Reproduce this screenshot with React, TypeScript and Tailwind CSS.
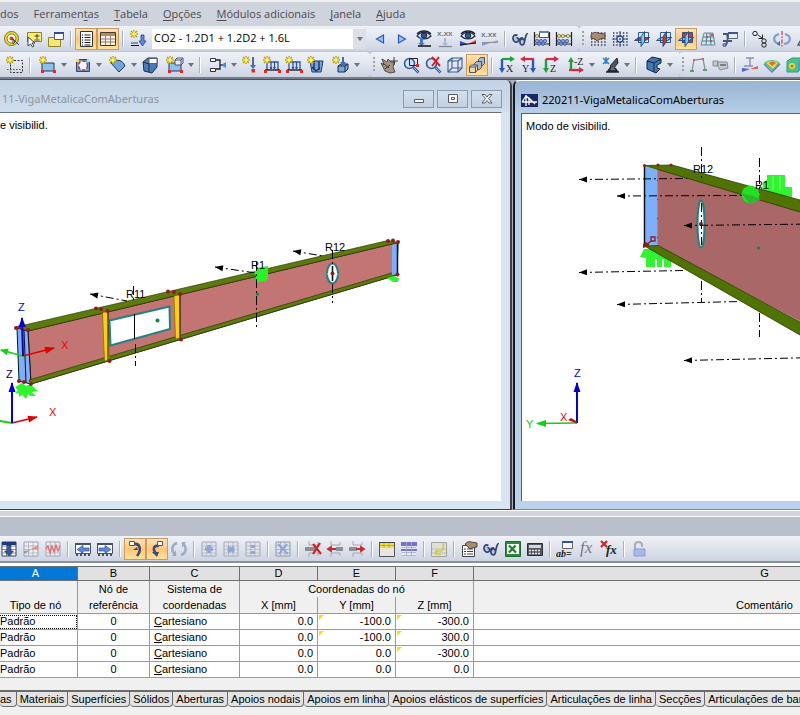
import React from "react";

/* ---------- toolbar glyphs, all on an 18 x 18 grid ---------- */

const Star = ({ x = 0, y = 0 }: { x?: number; y?: number }) => (
  <g transform={`translate(${x} ${y})`}>
    <path d="M4 0v8M0 4h8M1 1l6 6M7 1l-6 6" stroke="#b39a14" strokeWidth="1.4" />
    <path d="M4 1v6M1 4h6" stroke="#ffef3a" strokeWidth="1.2" />
    <circle cx="4" cy="4" r="1.8" fill="#fff46a" />
  </g>
);

const Dots = ({ c = "#333a45" }: { c?: string }) => (
  <path d="M2 3h15M2 6h15M2 9h15M2 12h15M2 15h15" stroke={c} strokeWidth="1.4" strokeDasharray="1.4 1.9" />
);

const Planes = ({ red }: { red: number }) => (
  <g stroke="#1f4a80" strokeWidth=".9">
    <path d="M5.500 2.500h10v10h-10z" fill={red === 2 ? "#f0281e" : "#d4ebfa"} />
    <path d="M1.500 10.500l4-3h11l-4 3z" fill={red === 0 ? "#f0281e" : "#74cdf4"} />
    <path d="M8 6.500l3.500-5v10l-3.500 5z" fill={red === 1 ? "#f0281e" : "#74cdf4"} />
    <path d="M5.500 7.500v5h3M11.500 10.500h1l4-3" fill="none" />
  </g>
);

const Grid = ({ c = "#6f7684", fill = "#eceef3" }: { c?: string; fill?: string }) => (
  <g>
    <path d="M2 2h14v14h-14z" fill={fill} stroke={c} />
    <path d="M2 6h14M2 9.500h14M2 13h14M6.500 2v14M11 2v14" stroke={c} strokeWidth=".6" />
  </g>
);

const Glasses = () => (
  <g fill="none" stroke="#34466f" strokeWidth="1.700">
    <path d="M6.500 5.500c-3-1.500-5 .5-4.500 3.500c.5 3 3.500 4 5 2.500c1.500-1.500.5-4-1.500-3.500" fill="#b7c5e0" />
    <path d="M7.500 11c1.500-3 3-3.500 4.500-3" />
    <path d="M9 10.500c.5-2 4-2.500 4.500 0c.5 2.500-1 4.500-2.500 4.500s-2.500-2-2-4.500z" fill="#b7c5e0" />
    <path d="M13.500 11l1.500-5.500c.3-1.200 1-2 2-2" />
  </g>
);

const Beads = () => (
  <g>
    <path d="M1.500 2v14M16.500 2v14M1 6h16M1 14h16" stroke="#222" strokeWidth="1.200" />
    <g fill="#ecd95b" stroke="#555" strokeWidth=".5">
      <circle cx="4" cy="6" r="1.700" /><circle cx="8" cy="6" r="1.700" /><circle cx="13" cy="6" r="1.700" />
    </g>
    <g fill="#7f9fe0" stroke="#223f86" strokeWidth=".6">
      <circle cx="4" cy="11" r="1.700" /><circle cx="8" cy="11" r="1.700" /><circle cx="12" cy="11" r="1.700" />
      <circle cx="6" cy="14" r="1.500" /><circle cx="10" cy="14" r="1.500" />
    </g>
  </g>
);

const Cube = ({ fill = "#dfe9f8", c = "#3c5a92" }: { fill?: string; c?: string }) => (
  <g fill={fill} stroke={c} strokeWidth="1.100">
    <path d="M2 5l4-3h10v10l-4 4h-10z" />
    <path d="M2 5h10v11M12 5l4-3M6 2v10h10M6 12l-4 4" fill="none" />
  </g>
);

const Surface = () => (
  <g>
    <path d="M3 7h12v8h-12z" fill="#8fc0ea" stroke="#23395e" />
    <path d="M2 14h3v3h-3zM14 14h3v3h-3z" fill="#e22828" />
  </g>
);

const Hand = () => (
  <path d="M2 5c2-3 5-3 7-2l7 1v4l-5 1-3 2-2-2-4-1z" fill="#a98a72" stroke="#4b3a30" strokeWidth=".9" />
);

const Loads = () => (
  <g>
    <path d="M4 14v-8h11v8M8 6v7M11.500 6v7" fill="none" stroke="#2d559f" strokeWidth="1.300" />
    <path d="M2 14h15" stroke="#111" strokeWidth="1.300" />
    <path d="M6.500 11h3l-1.500 3zM10 11h3l-1.500 3z" fill="#2d559f" />
    <path d="M1 14h3v3h-3zM15 14h3v3h-3z" fill="#e22828" />
    <Star />
  </g>
);

const Eye = () => (
  <g>
    <path d="M2 6c4-5 10-5 14 0c-4 4-10 4-14 0z" fill="#e7eefb" stroke="#1b2638" strokeWidth="1.200" />
    <circle cx="9" cy="5.500" r="2.800" fill="#2f57a8" stroke="#101a30" />
    <path d="M2 4c4-4 10-4 14 0" fill="none" stroke="#1b2638" strokeWidth="1.500" />
  </g>
);

const Lens = () => (
  <g>
    <circle cx="7.500" cy="7.500" r="5" fill="#cfe2f8" stroke="#345a9c" strokeWidth="1.600" />
    <path d="M11.500 11.500l5 5" stroke="#345a9c" strokeWidth="2.600" />
    <path d="M12 12l4 4" stroke="#b8cdf0" strokeWidth=".9" />
  </g>
);

const glyphs: Record<string, React.ReactNode> = {
  target: (
    <g>
      <circle cx="8.500" cy="8.500" r="7" fill="#f7e021" stroke="#7d701c" />
      <circle cx="8.500" cy="8.500" r="4.500" fill="#fff" stroke="#7d701c" />
      <circle cx="8.500" cy="8.500" r="2" fill="#dc3a20" />
      <path d="M10 9l6 6M10 9v5l2-2z" stroke="#444" fill="#fff" />
    </g>
  ),
  selectPlus: (
    <g>
      <path d="M2.500 2.500h14v9h-14z" fill="#f8ee72" stroke="#8e8524" />
      <path d="M12 4v5M9.500 6h5M9.500 10h5" stroke="#444" />
      <path d="M3 7v9l2.500-2 2 3 1.500-1-2-3h3z" fill="#fff" stroke="#333" strokeWidth=".9" />
    </g>
  ),
  folder: (
    <g>
      <path d="M1.500 7.500h12v9h-12z" fill="#f6e676" stroke="#8e8524" />
      <path d="M7.500 2.500h9v7h-9z" fill="#fff" stroke="#4b5a7c" />
      <path d="M7 2h10v2h-10z" fill="#324b8a" />
    </g>
  ),
  list: (
    <g>
      <path d="M3.500 1.500h12v15h-12z" fill="#fff" stroke="#333" />
      <path d="M5 5h1M5 7.500h1M5 10h1M5 12.500h1M5 15h1" stroke="#000" strokeWidth="1.200" />
      <path d="M7.500 5h6M7.500 7.500h6M7.500 10h6M7.500 12.500h6M7.500 15h6" stroke="#222" />
    </g>
  ),
  table: (
    <g>
      <path d="M1.500 2.500h15v13h-15z" fill="#f7f3ea" stroke="#4a3c2c" />
      <path d="M2 3h14v3h-14z" fill="#b08a63" />
      <path d="M2 9h14M2 12h14M6.500 6v9M11.500 6v9" stroke="#8f8170" />
    </g>
  ),
  newLoad: (
    <g>
      <Star x={1} />
      <path d="M12 5h3v6h2l-3.500 5-3.500-5h2z" fill="#5b8be0" stroke="#23488f" strokeWidth=".8" />
      <path d="M2 13h7" stroke="#23488f" />
      <path d="M2 15h8v1h-8z" fill="#111" />
    </g>
  ),
  prev: <path d="M12.500 5v8l-7-4z" fill="#9dc0f5" stroke="#2a5cc0" strokeWidth="1.200" />,
  next: <path d="M5.500 5v8l7-4z" fill="#9dc0f5" stroke="#2a5cc0" strokeWidth="1.200" />,
  eyeLoad: (
    <g>
      <Eye />
      <path d="M5 8h3v5h2l-3.500 3-3.500-3h2z" fill="#4676c8" />
      <path d="M3 16h13" stroke="#111" strokeWidth="1.500" />
    </g>
  ),
  eyeResult: (
    <g>
      <Eye />
      <path d="M1 16v-5l8 3z" fill="#2e48d8" />
      <path d="M9 14l8-4v4z" fill="#e83030" />
      <path d="M1 15l16-2" stroke="#111" />
    </g>
  ),
  valLoad: (
    <g>
      <text x="0" y="6" fontSize="8" fontWeight="bold" fill="#777c86" fontFamily="Liberation Sans, sans-serif">x.xx</text>
      <path d="M7 8h2v5h2l-3 3-3-3h2z" fill="#a9b6cf" />
      <path d="M2 16.500h13" stroke="#84888f" strokeWidth="1.300" />
    </g>
  ),
  valResult: (
    <g>
      <text x="0" y="7" fontSize="8" fontWeight="bold" fill="#777c86" fontFamily="Liberation Sans, sans-serif">x.xx</text>
      <path d="M1 16v-4l8 1z" fill="#8d99d8" />
      <path d="M9 13l8-3v3z" fill="#e39b9b" />
      <path d="M1 13l16-1" stroke="#84888f" />
    </g>
  ),
  glasses: <Glasses />,
  beads: <Beads />,
  beadsWin: (
    <g>
      <Beads />
      <path d="M6.500 1.500h9v6h-9z" fill="#fff" stroke="#555" />
      <path d="M6 1h10v2h-10z" fill="#6c7fb1" />
    </g>
  ),
  gridHand: (<g><Dots /><Hand /></g>),
  gridSnap: (
    <g>
      <Dots />
      <path d="M9 1v16M1 9h16" stroke="#345cc0" />
      <circle cx="9" cy="9" r="3" fill="#e9f1ff" stroke="#2545a0" strokeWidth="1.300" />
      <circle cx="9" cy="9" r="1" fill="#2545a0" />
    </g>
  ),
  planeA: <Planes red={0} />,
  planeB: <Planes red={1} />,
  planeC: <Planes red={2} />,
  planeGrid: (
    <g>
      <path d="M5 3h9l2 12h-14z" fill="#cfe6f0" stroke="#6f8797" />
      <path d="M4 7h11M3 11h12M8 3l-1 12M11 3l1 12" stroke="#4f7f96" />
      <path d="M12 4h2v2h-2zM7 6h2v2h-2zM11 10h2v2h-2z" fill="#d94848" />
    </g>
  ),
  cut: (
    <g>
      <path d="M2 4h5M2 11h9M4 16c3-3 3-8 2-12" stroke="#42557c" strokeWidth="1.800" fill="none" />
      <circle cx="3.500" cy="15" r="1.500" fill="#8ea2cc" stroke="#42557c" />
      <path d="M7.500 2.500h9v6h-9z" fill="#e7ecf8" stroke="#59647d" />
      <path d="M7 2h10v2h-10z" fill="#3e5598" />
    </g>
  ),
  moveCopy: (
    <g fill="none" stroke="#222">
      <circle cx="4" cy="3.500" r="2.200" /><circle cx="13" cy="11" r="2.200" /><circle cx="13" cy="15" r="2.200" />
      <path d="M6.500 4.500l5 4M11.500 4.500v4h-4" />
    </g>
  ),
  rotate: (
    <g fill="none">
      <path d="M6 4c-7 2-6 9 1 10M12 4c7 2 6 9-1 10" stroke="#7b9fd0" strokeWidth="2.200" />
      <path d="M9 1v16" stroke="#d33" strokeDasharray="4 1.500 1.500 1.500" strokeWidth="1.200" />
      <path d="M7 11v5l-3-2z" fill="#3e68a8" />
    </g>
  ),
  mirror: <path d="M3 15l6-11 6 11z" fill="none" stroke="#555" strokeWidth="1.300" />,

  dotted: (
    <g>
      <path d="M4.500 4.500h12v12h-12z" fill="none" stroke="#333" strokeDasharray="2 1.500" />
      <path d="M4.500 1v16M1 13.500h16" stroke="#555" strokeDasharray="1.500 1.500" />
      <Star />
    </g>
  ),
  newSurface: (<g><Surface /><Star /></g>),
  opening: (
    <g>
      <path d="M2.500 3.500h13v12h-13z" fill="#6d9dd0" stroke="#35445e" />
      <circle cx="9" cy="9.500" r="4.500" fill="#f2f5fa" stroke="#ba3434" strokeWidth="1.400" strokeDasharray="3 2" />
      <path d="M2 3h3v3h-3z" fill="#f4e53a" />
      <path d="M13 3h3v3h-3z" fill="#c9d4e5" />
    </g>
  ),
  fan: (
    <g>
      <path d="M2 7c5-5 12-3 14 3l-6 6z" fill="#6fa6dc" stroke="#23395e" />
      <Star />
    </g>
  ),
  solid: (
    <g>
      <path d="M2 6l5-4h9v9l-5 6-8-2z" fill="#4d7bb8" stroke="#1d2c4a" />
      <path d="M8 2.500h8v5h-8z" fill="#fff" stroke="#55617c" />
      <path d="M2 6l6 2v8" fill="none" stroke="#1d2c4a" />
    </g>
  ),
  solidSurf: (
    <g>
      <Surface />
      <path d="M9 4l2-2h6v5l-2 2h-6zM9 4h6v5M15 4l2-2" fill="#e6edf8" stroke="#3b4660" strokeWidth=".9" />
      <Star />
    </g>
  ),
  member: (
    <g>
      <path d="M1.500 2.500h5v3h-5zM1.500 12.500h5v3h-5z" fill="#fff" stroke="#333" />
      <path d="M7 4h4v9h-4M11 9h5" fill="none" stroke="#222" strokeWidth="1.300" />
      <path d="M17 6v6l-5-3z" fill="#4a8ad8" />
    </g>
  ),
  nodeLoad: (
    <g>
      <Star x={1} />
      <path d="M11 1h2v8h2l-3 4-3-4h2z" fill="#3f6cc0" />
      <path d="M10.500 13h3.500v3.500h-3.500z" fill="#e22828" />
    </g>
  ),
  loads: <Loads />,
  surfLoad: (
    <g>
      <path d="M3 5h13l-2 11h-9z" fill="#78a5d6" stroke="#23395e" />
      <path d="M7 5v9M12 5v9M5 11l4 4 4-3" stroke="#173770" strokeWidth="1.500" fill="none" />
      <Star />
    </g>
  ),
  solidLoad: (
    <g>
      <path d="M6 10l3-2h7v5l-3 3h-7z" fill="#7aa8d8" stroke="#1d2c4a" />
      <path d="M6 10h7v6M13 10l3-2" fill="none" stroke="#1d2c4a" />
      <path d="M10 1h2v5h2l-3 4-3-4h2z" fill="#3f6cc0" />
      <Star />
    </g>
  ),
  pan: (
    <g>
      <path d="M2 3l5 3 1-3 3 3 4 0-2 5 2 5-5 1-5-2-4-8 3 2z" fill="#a39384" stroke="#4a4038" strokeWidth=".9" />
      <path d="M14 1v8M10 5h8M3 7l6 5M5 13l5-4" stroke="#332c26" strokeWidth=".9" />
    </g>
  ),
  zoomWin: (<g><Lens /><path d="M7.500 2.500h8v7h-8z" fill="none" stroke="#222" /><path d="M14 8h3v3h-3z" fill="#e22828" /></g>),
  zoomX: (<g><Lens /><path d="M8 1l8 9M15 1l-7 9" stroke="#d81e1e" strokeWidth="2" /></g>),
  cube: <Cube />,
  cubes: (
    <g fill="#a9b6cb" stroke="#39476a" strokeWidth=".9">
      <path d="M10.500 3.500l2-2h4v6l-2 2h-4z" />
      <path d="M6.500 7.500l2-2h5v6l-2 2h-5z" />
      <path d="M1.500 11l2-2h6v5l-2 2.500h-6zM1.500 11h6v5.500M7.500 11l2-2" fill="#e8d6ae" />
    </g>
  ),
  viewX: (
    <g>
      <path d="M4 3v10" stroke="#2b56c6" strokeWidth="2.400" /><path d="M1 12h6l-3 5z" fill="#2b56c6" />
      <path d="M4 3h9" stroke="#1fa23c" strokeWidth="2.200" /><path d="M12 0v6l5-3z" fill="#1fa23c" />
      <text x="8" y="16" fontSize="10" fill="#222" fontFamily="Liberation Serif, serif">X</text>
    </g>
  ),
  viewY: (
    <g>
      <path d="M13 3v10" stroke="#2b56c6" strokeWidth="2.400" /><path d="M10 12h6l-3 5z" fill="#2b56c6" />
      <path d="M4 3h10" stroke="#dc2742" strokeWidth="2.200" /><path d="M5 0v6l-5-3z" fill="#dc2742" />
      <text x="2" y="16" fontSize="10" fill="#222" fontFamily="Liberation Serif, serif">Y</text>
    </g>
  ),
  viewZ: (
    <g>
      <path d="M4 3v10" stroke="#1fa23c" strokeWidth="2.400" /><path d="M1 12h6l-3 5z" fill="#1fa23c" />
      <path d="M4 3h9" stroke="#dc2742" strokeWidth="2.200" /><path d="M12 0v6l5-3z" fill="#dc2742" />
      <text x="8" y="16" fontSize="10" fill="#222" fontFamily="Liberation Serif, serif">Z</text>
    </g>
  ),
  viewMinusZ: (
    <g>
      <path d="M4 5v10" stroke="#1fa23c" strokeWidth="2.400" /><path d="M1 6h6l-3-5z" fill="#1fa23c" />
      <path d="M2 14h11" stroke="#dc2742" strokeWidth="2.200" /><path d="M12 11v6l5-3z" fill="#dc2742" />
      <text x="7" y="9" fontSize="10" fill="#222" fontFamily="Liberation Serif, serif">-Z</text>
    </g>
  ),
  scope: (
    <g>
      <path d="M1 2l6 6M7 2l-6 6M4 1v7" stroke="#2e7bd0" strokeWidth="1.500" />
      <path d="M15 2l-7 8 3 3 5-6z" fill="#4d525c" stroke="#20242c" />
      <path d="M4 16h13M9 11l-3 4h9l-2-3" stroke="#20242c" strokeWidth="1.500" fill="#6a6f78" />
    </g>
  ),
  block: (
    <g stroke="#15243c">
      <path d="M2 5l5-4 9 2v4l-4 2v3l3 1-4 4-9-4z" fill="#4278b4" />
      <path d="M2 5l7 2v9M9 7l7-4" fill="none" />
    </g>
  ),
  frame: (
    <g>
      <path d="M3 15l2-11 9-1 2 10" fill="none" stroke="#8b919b" strokeWidth="1.300" />
      <path d="M4 3h2v2h-2zM13 2h2v2h-2z" fill="#c66" />
      <path d="M1 15h4M14 14h4" stroke="#4ba85a" strokeWidth="2" />
    </g>
  ),
  tape: (
    <g>
      <path d="M2 5h5v5h-5zM7 6h9l1 6-8 2-3-5z" fill="#c5c8cd" stroke="#888d96" />
      <path d="M9 9h6" stroke="#666" strokeWidth="1.500" />
    </g>
  ),
  deform: (
    <g>
      <path d="M5 2h8M9 2v8M3 10h9" stroke="#8a94b4" strokeWidth="1.500" />
      <path d="M1 16v-4l8 1z" fill="#4d61dc" /><path d="M9 13l8-3v3z" fill="#e85c5c" />
    </g>
  ),
  plate: (
    <g>
      <path d="M1 7c5-4 11-4 16 0l-7 8z" fill="#3ec26e" />
      <path d="M3 7c4-3 9-3 12 0l-5 6z" fill="#e9dc3c" />
      <path d="M6 7c2-2 5-2 7 0l-4 3z" fill="#e3684a" />
      <path d="M1 8l8 8 8-8" fill="none" stroke="#5a78d8" strokeWidth="1.300" />
    </g>
  ),
  solidRes: (
    <g>
      <path d="M2 5l5-3h10v9l-4 5h-11z" fill="#4cc37e" stroke="#3a8f93" />
      <circle cx="7" cy="10" r="3" fill="#e6df3c" /><circle cx="7" cy="10" r="1.500" fill="#e35a40" />
      <path d="M13 6l4-3v8l-4 4z" fill="#4a9fd0" />
    </g>
  ),

  gridDown: (
    <g>
      <Grid fill="#fff" c="#39435c" /><path d="M2 2h14v3h-14z" fill="#1f3a74" />
      <path d="M7.500 5h3v6h3l-4.500 5-4.500-5h3z" fill="#31579e" stroke="#16305e" strokeWidth=".6" />
    </g>
  ),
  gridDiag: (<g><Grid c="#9aa0ab" /><path d="M2 14v-3l7-1z" fill="#9499b2" /><path d="M9 9l7-4v4z" fill="#ee8a8a" /></g>),
  gridWave: (<g><Grid c="#a0a5b0" /><path d="M2 9l2-3 2 7 2-7 2 6 2-7 2 6 2-5" fill="none" stroke="#e66" strokeWidth="1.200" /></g>),
  colLeft: (
    <g>
      <path d="M1.500 3.500h15v10h-15z" fill="#fff" stroke="#4b515c" /><path d="M1 3h16v2h-16zM2 13h2v3h-2zM6 13h2v3h-2zM10 13h2v3h-2zM14 13h2v3h-2z" fill="#4b515c" />
      <path d="M15 8v3h-6v2.500l-6-4 6-4v2.500z" fill="#5e88de" stroke="#2c4f9e" strokeWidth=".7" />
    </g>
  ),
  colRight: (
    <g>
      <path d="M1.500 3.500h15v10h-15z" fill="#fff" stroke="#4b515c" /><path d="M1 3h16v2h-16zM2 13h2v3h-2zM6 13h2v3h-2zM10 13h2v3h-2zM14 13h2v3h-2z" fill="#4b515c" />
      <path d="M3 8v3h6v2.500l6-4-6-4v2.500z" fill="#5e88de" stroke="#2c4f9e" strokeWidth=".7" />
    </g>
  ),
  jumpOut: (
    <g>
      <path d="M8 4c6-1 8 6 3 12" fill="none" stroke="#3b4c70" strokeWidth="2.600" />
      <path d="M3.500 1.500h5v4h-5z" fill="#fff" stroke="#555" /><path d="M11 7l-4 3h5z" fill="#3b4c70" />
    </g>
  ),
  jumpIn: (
    <g>
      <path d="M11 6c-6-1-6 3-4 6v2" fill="none" stroke="#3b4c70" strokeWidth="2.600" />
      <path d="M9.500 1.500h5v4h-5z" fill="#fff" stroke="#555" /><path d="M4 12h7l-2 5z" fill="#3b4c70" />
    </g>
  ),
  sync: (
    <g fill="none" stroke="#9eaabf" strokeWidth="2.500">
      <path d="M7 3c-6 2-6 9-1 12M11 15c6-2 6-9 1-12" />
      <path d="M6 10v6h-4zM12 8v-6h4z" fill="#9eaabf" stroke="none" />
    </g>
  ),
  addA: (<g><Grid c="#a4a9b4" fill="#e1e4ea" /><path d="M9 5v8M5 9h8" stroke="#93a4d6" strokeWidth="3.500" /></g>),
  addB: (<g><Grid c="#a4a9b4" fill="#e1e4ea" /><path d="M6 7l6 5M12 7l-6 5" stroke="#93a4d6" strokeWidth="3" /></g>),
  addC: (<g><Grid c="#a4a9b4" fill="#e1e4ea" /><path d="M7 5h4v3h-4zM7 11h4v3h-4z" fill="#93a4d6" /></g>),
  clear: (<g><Grid c="#8f97a8" fill="#dfe6f2" /><path d="M4 4l10 10M13 4l-8 10" stroke="#8fa4d8" strokeWidth="2" /></g>),
  delRow: (
    <g>
      <path d="M5 1v4h9v-3M5 17v-4h9v3" fill="none" stroke="#aaa" /><path d="M1 7h10v4h-10z" fill="#8b8f96" />
      <path d="M9 4l8 10M16 3l-7 11" stroke="#cf2222" strokeWidth="2.200" />
    </g>
  ),
  insLeft: (
    <g>
      <path d="M5 1v4h9v-3M5 17v-4h9v3" fill="none" stroke="#aaa" /><path d="M10 7h7v4h-7z" fill="#8b8f96" />
      <path d="M10 9h-5M5 7l-3 2 3 2z" stroke="#c62a2a" strokeWidth="1.800" fill="#c62a2a" />
    </g>
  ),
  insRight: (
    <g>
      <path d="M5 1v4h9v-3M5 17v-4h9v3" fill="none" stroke="#aaa" /><path d="M1 7h8v4h-8z" fill="#8b8f96" />
      <path d="M8 9h5M13 7l3 2-3 2z" stroke="#c62a2a" strokeWidth="1.800" fill="#c62a2a" />
    </g>
  ),
  yellowTop: (
    <g>
      <path d="M1.500 2.500h15v14h-15z" fill="#e7e6e2" stroke="#555" /><path d="M2 3h14v5h-14z" fill="#efe14a" />
      <path d="M2 5.500h14M6 3v5M11 3v5" stroke="#a79c2d" strokeWidth=".7" /><path d="M1 2h16v1h-16z" fill="#444" />
    </g>
  ),
  blueRows: (
    <g>
      <path d="M2 2h14v14h-14z" fill="#e7eaf6" /><path d="M1 3h16M1 5h16M1 10h16" stroke="#7373cf" strokeWidth="1.800" />
      <path d="M2 7.500h14M2 12.500h14M2 15.500h14M6.500 2v14M11.500 2v14" stroke="#aab" strokeWidth=".8" />
    </g>
  ),
  note: (
    <g>
      <path d="M1.500 2.500h15v14h-15z" fill="#dde1d6" stroke="#a0a69c" /><path d="M2 9h14M2 13h14" stroke="#b9bfb2" />
      <path d="M13 3c1 3 0 7-2 8h-5v3h5" fill="none" stroke="#d8c93a" strokeWidth="1.600" />
    </g>
  ),
  props: (
    <g>
      <path d="M2.500 5.500h12v11h-12z" fill="#fff" stroke="#444" /><path d="M4 9h2M4 11.500h2M4 14h2M7 9h6M7 11.500h6M7 14h6" stroke="#444" />
      <path d="M5 4c2-2 4-3 6-2l6 1v4l-5 1-2 1-2-2z" fill="#a98a72" stroke="#4b3a30" strokeWidth=".9" />
    </g>
  ),
  excel: (
    <g>
      <path d="M1.500 1.500h15v15h-15z" fill="#2f8a40" stroke="#1c6a2d" /><path d="M3 4h12v10h-12z" fill="#f2f9f0" />
      <path d="M5 5.500l7 7M11.500 5.500l-6.500 7" stroke="#227a33" strokeWidth="2.200" />
    </g>
  ),
  calc: (
    <g>
      <path d="M1.500 3.500h15v12h-15z" fill="#55585f" stroke="#2c2e33" /><path d="M3 5h12v3h-12z" fill="#d3d7de" />
      <path d="M3 10.500h12M3 13.500h12" stroke="#e5e7ea" strokeWidth="1.500" strokeDasharray="2 1" />
    </g>
  ),
  abWin: (
    <g>
      <path d="M6.500 1.500h10v7h-10z" fill="#f3f5fa" stroke="#666" /><path d="M6 1h11v2h-11z" fill="#37528f" />
      <text x="0" y="17" fontSize="10" fontWeight="bold" fontStyle="italic" fill="#222" fontFamily="Liberation Serif, serif">ab=</text>
    </g>
  ),
  fx: <text x="2" y="13" fontSize="17" fontStyle="italic" fill="#777c85" fontFamily="Liberation Serif, serif">fx</text>,
  fxDel: (
    <g>
      <text x="6" y="14" fontSize="13" fontWeight="bold" fontStyle="italic" fill="#222" fontFamily="Liberation Serif, serif">fx</text>
      <path d="M1 1l6 6M7 1l-6 6" stroke="#d02424" strokeWidth="2.200" />
    </g>
  ),
  lock: (
    <g>
      <path d="M5 9v-4c0-4 7-4 7 0v2" fill="none" stroke="#a7adb9" strokeWidth="2" />
      <path d="M4 9h11v7h-11z" fill="#a7b9ea" stroke="#8d9cc9" />
    </g>
  ),
};

type Item = { k: "b" | "p" | "s" | "d"; n?: string };
const parse = (s: string): Item[] =>
  s.split(" ").map((t) => {
    if (t === "|") return { k: "s" };
    if (t.startsWith("*")) return { k: "p", n: t.slice(1) };
    if (t.startsWith("+")) return { k: "d", n: t.slice(1) };
    return { k: "b", n: t };
  });

const Glyph = ({ n }: { n: string }) => (
  <svg width="18" height="18" viewBox="0 0 18 18" fill="none" aria-hidden="true" className="block shrink-0">
    {glyphs[n]}
  </svg>
);

const Caret = () => (
  <svg width="6" height="4" viewBox="0 0 6 4" aria-hidden="true" className="shrink-0">
    <path d="M0 0h6l-3 4z" fill="#6d737e" />
  </svg>
);

const Tools = ({ items }: { items: string }) => (
  <>
    {parse(items).map((it, i) => {
      if (it.k === "s")
        return <span key={i} className="mx-[3px] h-4 w-0.5 shrink-0 border-l border-r border-l-[#a9b1c0] border-r-white" />;
      if (it.k === "p")
        return (
          <button key={i} type="button" aria-pressed="true" aria-label={it.n}
            className="flex h-[22px] w-[22px] shrink-0 items-center justify-center border border-[#c99a62] bg-linear-to-b from-[#fde3bd] via-[#ffc673] to-[#ffe39a]">
            <Glyph n={it.n!} />
          </button>
        );
      if (it.k === "d")
        return (
          <button key={i} type="button" aria-label={it.n} className="flex h-[22px] w-[35px] shrink-0 items-center gap-1 pl-[5px]">
            <Glyph n={it.n!} />
            <Caret />
          </button>
        );
      return (
        <button key={i} type="button" aria-label={it.n} className="flex h-[22px] w-[22px] shrink-0 items-center justify-center">
          <Glyph n={it.n!} />
        </button>
      );
    })}
  </>
);

const Grip = () => (
  <span className="mr-[3px] ml-[3px] h-4 w-[2px] shrink-0 bg-[repeating-linear-gradient(to_bottom,#9aa3b3_0_2px,transparent_2px_4px)]" />
);

const bar = "flex h-[25px] shrink-0 items-center bg-linear-to-b from-[#eff2f8] via-[#e0e5ef] to-[#ccd3e1]";

/* ---------- menu ---------- */

const menu: [string, string, string][] = [
  ["", "", "dos"],
  ["Ferramen", "t", "as"],
  ["", "T", "abela"],
  ["", "O", "pções"],
  ["", "M", "ódulos adicionais"],
  ["", "J", "anela"],
  ["", "A", "juda"],
];

/* ---------- model views ---------- */

const label = { fontFamily: "Liberation Sans, Arial, sans-serif", fontSize: 11 };

const Arrow = ({ x1, y1, x2, y2, color, w = 2, head = 9 }: { x1: number; y1: number; x2: number; y2: number; color: string; w?: number; head?: number }) => {
  const a = (Math.atan2(y2 - y1, x2 - x1) * 180) / Math.PI;
  return (
    <g>
      <line x1={x1} y1={y1} x2={x2} y2={y2} stroke={color} strokeWidth={w} />
      <path d={`M1 0l-${head + 1} -3.500v7z`} fill={color} transform={`translate(${x2} ${y2}) rotate(${a})`} />
    </g>
  );
};

const DashArrow = ({ x1, y1, x2, y2 }: { x1: number; y1: number; x2: number; y2: number }) => {
  const a = (Math.atan2(y2 - y1, x2 - x1) * 180) / Math.PI;
  return (
    <g>
      <line x1={x2} y1={y2} x2={x1} y2={y1} stroke="#000" strokeDasharray="8 3 2 3" />
      <path d="M0 0l-8 -3v6z" fill="#000" transform={`translate(${x2} ${y2}) rotate(${a})`} />
    </g>
  );
};

const Nodes = ({ pts, r = 2 }: { pts: number[][]; r?: number }) => (
  <>
    {pts.map(([x, y], i) => (
      <circle key={i} cx={x} cy={y} r={r} fill="#8f1d1d" />
    ))}
  </>
);

const LeftModel = () => (
  <svg width="501" height="388" viewBox="0 113 501 388" fill="none" role="img" aria-label="Viga, vista isométrica" className="block overflow-visible">
    <path d="M15 387l7 -4l4 3l4 -2l8 7l-6 1l4 4h-6l-2 -2l-2 5l-4 -4l-3 2v-4h-4l3 -3z" fill="#2ef52e" />
    <path d="M28 331L398 242.500L397 275L31 384z" fill="#c37573" stroke="#222" />
    <path d="M17 328L28 331L31 384L19 381z" fill="#7cb0fa" stroke="#111" />
    <path d="M24 330L26 383" stroke="#111" />
    <path d="M29 380L395 272L397 275L31 384z" fill="#5d7a0c" stroke="#2c3a05" strokeWidth=".7" />
    <path d="M16 327L388 240.500L398 242.500L28 331z" fill="#5d7a0c" stroke="#2c3a05" strokeWidth=".7" />
    <path d="M392 245L397 243.500V274L392 275z" fill="#7cb0fa" />
    <path d="M397.500 243V274" stroke="#111" strokeWidth="1.500" />
    <path d="M102.500 312.500L108 311.500L109.500 360L104.500 361z" fill="#ffd000" stroke="#6d5a00" strokeWidth=".6" />
    <path d="M174 296L179.500 294.500L180.500 338L175.500 339z" fill="#ffd000" stroke="#6d5a00" strokeWidth=".6" />
    <path d="M108 312V360M180 295V338" stroke="#111" />
    <path d="M109.500 320.500L169.500 306.500L170 329L110.500 345.500z" fill="#fff" stroke="#1f8286" strokeWidth="2" />
    <circle cx="157.500" cy="320.500" r="2" fill="#0b8a3c" />
    <path d="M133.500 286V303M135.500 344V366" stroke="#000" strokeDasharray="9 3 2 3" />
    <path d="M134.500 314V339" stroke="#000" />
    <ellipse cx="332.500" cy="273.500" rx="5.500" ry="10" fill="#fff" stroke="#1f8286" strokeWidth="2" />
    <path d="M332.500 250V303" stroke="#000" strokeDasharray="9 3 2 3" />
    <path d="M332.500 266V281" stroke="#000" strokeWidth="1.500" />
    <circle cx="332.500" cy="273.500" r="2" fill="#8f1d1d" />
    <path d="M327 274h1M337 274h1" stroke="#d8a020" strokeWidth="2" />
    <path d="M250 272L256 271V268L268 266V280L256 283V275z" fill="#24f524" />
    <path d="M256.500 262V327" stroke="#000" strokeDasharray="9 3 2 3" />
    <circle cx="257.500" cy="294" r="1.500" fill="#0b8a3c" />
    <path d="M387 278l6 -2l6 2l-1 4h-5z" fill="#2ef52e" />
    <DashArrow x1={127} y1={301} x2={90} y2={294} />
    <DashArrow x1={256} y1={273} x2={215} y2={267} />
    <DashArrow x1={323} y1={256} x2={293} y2={251} />
    <Nodes pts={[[16, 328], [20, 327], [28, 330], [19, 381], [24, 382], [31, 384], [96, 308.500], [101, 309], [107.500, 311], [109.500, 361], [168, 291.500], [174, 292], [180, 294], [181, 339.500], [388, 241], [393, 240.500], [398, 242], [397.500, 274.500]]} />
    <Arrow x1={23} y1={356} x2={54} y2={348} color="#e00000" w={1.5} />
    <Arrow x1={23} y1={356} x2={1} y2={350} color="#12d012" w={1.5} head={7} />
    <Arrow x1={23} y1={356} x2={22} y2={318} color="#0000d8" />
    <Arrow x1={12} y1={423} x2={37} y2={417} color="#e00000" w={1.5} />
    <path d="M12 423L0 421" stroke="#12d012" strokeWidth="2" />
    <Arrow x1={12} y1={423} x2={12} y2={383} color="#0000d8" />
    <g style={label}>
      <text x="126" y="298" fill="#000">R11</text>
      <text x="251" y="269" fill="#000">R1</text>
      <text x="325" y="251" fill="#000">R12</text>
      <text x="18" y="311" fill="#0000e8">Z</text>
      <text x="61" y="349" fill="#f00000">X</text>
      <text x="6" y="378" fill="#000070">Z</text>
      <text x="49" y="416" fill="#f00000">X</text>
    </g>
  </svg>
);

const RightModel = () => (
  <svg width="378" height="387" viewBox="522 114 378 387" fill="none" role="img" aria-label="Viga, vista em perspectiva" className="block overflow-visible">
    <path d="M640 257L644 249H658L671 257V267H664V259H662V267H657V259H655V267H646V258z" fill="#2ef52e" />
    <path d="M762 194L763 182L767 180V175H785V187H792V197z" fill="#2ef52e" />
    <path d="M767 180v10M773 176v14M780 176v14" stroke="#7cfb7c" />
    <path d="M657 168L900 240V374L657 246z" fill="#a96767" />
    <path d="M644.500 166L657.500 170V246H644.500z" fill="#7cb0fa" />
    <path d="M644.500 166V246" stroke="#111" strokeWidth="1.500" />
    <path d="M657.500 180V240" stroke="#6a3a4a" strokeDasharray="1 18" />
    <path d="M644.500 165.500L672 165L800 200L900 227V241L800 212z" fill="#4f7404" stroke="#2c3a05" strokeWidth=".8" />
    <path d="M644.500 246L658 245.500L800 322L900 376V389L800 335z" fill="#4f7404" stroke="#2c3a05" strokeWidth=".8" />
    <circle cx="750.500" cy="194.500" r="9" fill="#22e022" />
    <path d="M741 193L752 196L761 199L750 203.500z" fill="#2fb52f" />
    <ellipse cx="701" cy="224" rx="3.500" ry="23.500" fill="#fff" stroke="#1f8286" strokeWidth="2" />
    <path d="M701.500 147V178M701.500 203V245M701.500 281V302M759.500 158V193M759.500 313V337" stroke="#000" strokeDasharray="9 3 2 3" />
    <circle cx="701" cy="224" r="2" fill="#8f1d1d" />
    <circle cx="758.500" cy="248" r="1.500" fill="#0b8a3c" />
    <DashArrow x1={687} y1={178.500} x2={579} y2={179.500} />
    <DashArrow x1={743} y1={195.500} x2={617} y2={196} />
    <DashArrow x1={860} y1={223.500} x2={684} y2={225.500} />
    <DashArrow x1={684} y1={270.500} x2={579} y2={272.500} />
    <DashArrow x1={740} y1={301.500} x2={617} y2={304.500} />
    <DashArrow x1={860} y1={356.500} x2={684} y2={360.500} />
    <Nodes pts={[[644.500, 165.500], [658, 165], [671, 165]]} r={1.500} />
    <path d="M651 237h4v4h-4zM651 241L644 247" stroke="#8f1d1d" strokeWidth="1.300" />
    <path d="M643 248v-4l3 -2l3 2v2z" fill="#8f1d1d" />
    <Arrow x1={577} y1={423} x2={577} y2={383} color="#0000d8" />
    <Arrow x1={577} y1={423} x2={537} y2={423.500} color="#12d012" w={1.500} />
    <path d="M577 423.500L568 420L571 418L576 421z" fill="#e00000" />
    <g style={label}>
      <text x="693" y="173" fill="#000">R12</text>
      <text x="755" y="189" fill="#000">R1</text>
      <text x="574" y="377" fill="#0000e8">Z</text>
      <text x="526" y="428" fill="#20c020">Y</text>
      <text x="560" y="421" fill="#f00000">X</text>
    </g>
  </svg>
);

/* ---------- node table ---------- */

const rows: [string, string, string][] = [
  ["0.0", "-100.0", "-300.0"],
  ["0.0", "-100.0", "300.0"],
  ["0.0", "0.0", "-300.0"],
  ["0.0", "0.0", "0.0"],
];
const flags = ["YZ", "YZ", "Z", ""];

const cell = "h-4 border-r border-b border-[#9a9a9a] bg-white p-0";
const head = "border-r border-[#9a9a9a] bg-[#f0f0f0] p-0 text-center font-normal";
const letter = "h-[14px] border-r border-b border-[#6e6e6e] p-0 text-center font-normal";

const Flag = () => (
  <svg width="5" height="5" viewBox="0 0 5 5" className="absolute top-px left-px" aria-hidden="true">
    <path d="M0 0h5l-5 5z" fill="#f2e400" />
  </svg>
);

const NodeTable = () => (
  <table className="-ml-1.5 w-[1062px] table-fixed border-separate border-spacing-0 text-[11px] leading-[15px]">
    <colgroup>
      <col className="w-[84px]" />
      <col className="w-[72px]" />
      <col className="w-[90px]" />
      <col className="w-[78px]" />
      <col className="w-[78px]" />
      <col className="w-[78px]" />
      <col />
    </colgroup>
    <thead>
      <tr className="leading-[13px]">
        {["A", "B", "C", "D", "E", "F", "G"].map((l, i) => (
          <th key={l} className={`${letter} ${i === 0 ? "bg-[#0078d7] text-white" : "bg-[#e1e1e1]"}`}>{l}</th>
        ))}
      </tr>
      <tr>
        <th rowSpan={2} className={`${head} border-b align-bottom leading-4`}>Tipo de nó</th>
        <th rowSpan={2} className={`${head} border-b leading-4`}>Nó de<br />referência</th>
        <th rowSpan={2} className={`${head} border-b leading-4`}>Sistema de<br />coordenadas</th>
        <th colSpan={3} className={`${head} h-4`}>Coordenadas do nó</th>
        <th rowSpan={2} className={`${head} border-b align-bottom leading-4`}>Comentário</th>
      </tr>
      <tr>
        <th className={`${head} h-[17px] border-b`}>X [mm]</th>
        <th className={`${head} border-b`}>Y [mm]</th>
        <th className={`${head} border-b`}>Z [mm]</th>
      </tr>
    </thead>
    <tbody>
      {rows.map((r, i) => (
        <tr key={i}>
          <td className={`${cell} pl-1.5 ${i === 0 ? "outline-1 -outline-offset-2 outline-dotted outline-black" : ""}`}>Padrão</td>
          <td className={`${cell} text-center`}>0</td>
          <td className={`${cell} pl-1`}><span className="underline">C</span>artesiano</td>
          {r.map((v, j) => (
            <td key={j} className={`${cell} relative pr-1 text-right`}>
              {j > 0 && flags[i].includes("XYZ"[j]) && <Flag />}
              {v}
            </td>
          ))}
          <td className={cell} />
        </tr>
      ))}
    </tbody>
  </table>
);

const tabs = ["as", "Materiais", "Superfícies", "Sólidos", "Aberturas", "Apoios nodais", "Apoios em linha", "Apoios elásticos de superfícies", "Articulações de linha", "Secções", "Articulações de barras"];

const WinButton = ({ name, children }: { name: string; children: React.ReactNode }) => (
  <button type="button" aria-label={name} className="flex h-[18px] w-[31px] items-center justify-center border border-[#8c9bb0] bg-linear-to-b from-[#d3dfec] to-[#c3d1e2]">
    <svg width="12" height="10" viewBox="0 0 12 10" fill="#fff" stroke="#555b66" aria-hidden="true">{children}</svg>
  </button>
);

export default function App() {
  return (
    <div className="flex h-screen w-full flex-col overflow-hidden bg-[#f0f0f0] font-['Liberation_Sans',Arial,sans-serif] text-[11px] text-black">
      <nav className="mt-0.5 flex h-6 shrink-0 items-center gap-[15px] overflow-hidden bg-[#cfd3dc] font-['Open_Sans',sans-serif] text-[11px] whitespace-nowrap text-[#4a4c52]">
        {menu.map(([a, u, b]) => (
          <button key={a + u + b} type="button">
            {a}<span className="underline underline-offset-2">{u}</span>{b}
          </button>
        ))}
      </nav>

      <div className="flex shrink-0 flex-col gap-px overflow-hidden bg-[#bfc5d1]">
        <div className="flex overflow-hidden">
          <div className={`${bar} rounded-r pl-px`}>
            <Tools items="target selectPlus folder | *list *table | newLoad" />
            <div className="relative ml-[3px] flex h-5 items-center">
              <select aria-label="Caso de carga" className="h-5 w-[214px] appearance-none bg-white pl-0.5 font-['Open_Sans',sans-serif] text-[11px] text-black">
                <option>CO2 - 1.2D1 + 1.2D2 + 1.6L</option>
              </select>
              <span className="pointer-events-none absolute top-0 right-0 flex h-5 w-[13px] items-center justify-center bg-[#dcdfe6]"><Caret /></span>
            </div>
            <span className="w-[3px] shrink-0" />
            <Tools items="prev next eyeLoad valLoad eyeResult valResult | glasses beadsWin beads" />
            <span className="w-1 shrink-0" />
          </div>
          <div className={`${bar} grow rounded-l`}>
            <Grip />
            <Tools items="gridHand gridSnap planeA planeB *planeC planeGrid cut | moveCopy rotate mirror" />
          </div>
        </div>
        <div className="flex overflow-hidden">
          <div className={`${bar} rounded-r pr-2`}>
            <span className="w-1 shrink-0" />
            <Tools items="dotted | +newSurface +opening +fan solid +solidSurf | +member nodeLoad loads loads surfLoad +solidLoad" />
          </div>
          <div className={`${bar} rounded-l pr-1`}>
            <Grip />
            <Tools items="pan zoomWin zoomX cube *cubes | viewX viewY viewZ +viewMinusZ +scope | +block" />
          </div>
          <div className={`${bar} grow rounded-l`}>
            <Grip />
            <Tools items="frame tape | deform plate solidRes" />
          </div>
        </div>
      </div>
      <div className="h-[3px] shrink-0 border-t-2 border-b border-t-[#777c86] border-b-[#4c5057] bg-[#555]" />

      <main className="flex min-h-0 flex-1 gap-px overflow-hidden bg-[#a7b0be]">
        <section className="flex w-[64%] shrink-0 flex-col rounded-tr-md border-r-2 border-b border-[#3c3f45] bg-[#d7e4f1] pr-2 pb-2">
          <header className="-mr-2 flex h-8 shrink-0 items-center justify-between rounded-tr-md bg-linear-to-b from-[#c3d3e4] to-[#cfdeec] pt-1.5 pr-2 pl-0.5">
            <h2 className="font-['Noto_Sans',sans-serif] text-[11px] text-[#8d959f]">11-VigaMetalicaComAberturas</h2>
            <div className="flex gap-[3px]">
              <WinButton name="Minimizar"><path d="M1.500 5.500h9v3h-9z" /></WinButton>
              <WinButton name="Restaurar"><path d="M1.500 .5h9v8h-9zM4.500 3.500h3v2h-3z" /></WinButton>
              <WinButton name="Fechar"><path d="M1 .5h3l2 2.500 2-2.500h3l-3.500 4 3.500 4.500h-3l-2-2.500-2 2.500h-3l3.500-4.500z" /></WinButton>
            </div>
          </header>
          <div className="relative min-h-0 flex-1 overflow-hidden border-t border-r border-t-[#6d7278] border-r-[#e4e4e4] bg-white">
            <LeftModel />
            <p className="absolute top-1 left-0">e visibilid.</p>
          </div>
        </section>
        <section className="flex min-w-0 flex-1 flex-col rounded-tl-md border-t border-b border-l-2 border-t-white border-b-[#12b4d0] border-l-[#15181c] bg-[#b9d1ea] pb-2 pl-1.5">
          <header className="-ml-1.5 flex h-8 shrink-0 items-center gap-1 rounded-tl-md bg-linear-to-b from-[#98b4d2] to-[#b7cfe8] pt-1.5 pl-1.5">
            <svg width="17" height="13" viewBox="0 0 17 13" aria-hidden="true">
              <path d="M0 0h17v13h-17z" fill="#1b2764" />
              <path d="M1 8h15M5 1v11M5 2l-4 6M5 2l7 6M8 11v-7l6 6" fill="none" stroke="#fff" strokeWidth="1.300" />
            </svg>
            <h2 className="font-['Noto_Sans',sans-serif] text-[11px] whitespace-nowrap">220211-VigaMetalicaComAberturas</h2>
          </header>
          <div className="relative min-h-0 flex-1 overflow-hidden border-t border-l border-[#5b6068] bg-white">
            <RightModel />
            <p className="absolute top-1 left-1">Modo de visibilid.</p>
          </div>
        </section>
      </main>

      <div className="h-[7px] shrink-0 border-t border-b border-white bg-[#d1d5e0]" />
      <div className="h-[19px] shrink-0 bg-[#b9c0cb]" />
      <div className="flex h-[25px] shrink-0 items-center overflow-hidden bg-linear-to-b from-[#eff2f8] to-[#cdd4e2]">
        <span className="-ml-0.5" />
        <Tools items="gridDown gridDiag gridWave | colLeft colRight | *jumpOut *jumpIn sync | addA addB addC | clear | delRow insLeft insRight | yellowTop blueRows | note | props glasses excel calc | abWin fx fxDel | lock" />
      </div>
      <div className="h-1.5 shrink-0 border-t-2 border-b border-t-[#8c9099] border-b-[#6c7078] bg-white" />
      <div className="shrink-0 overflow-hidden">
        <NodeTable />
      </div>
      <div className="mt-3 flex h-[17px] shrink-0 overflow-hidden border-t-2 border-t-[#6b6b6b] whitespace-nowrap">
        {tabs.map((t, i) => (
          <button key={t} type="button"
            className={`h-[15px] shrink-0 rounded-b border-r border-b border-[#6b6b6b] bg-[#e3e3e3] leading-[13px] ${i === 0 ? "pr-1" : "px-[3px]"}`}>
            {t}
          </button>
        ))}
      </div>
      <div className="h-2 shrink-0" />
    </div>
  );
}
